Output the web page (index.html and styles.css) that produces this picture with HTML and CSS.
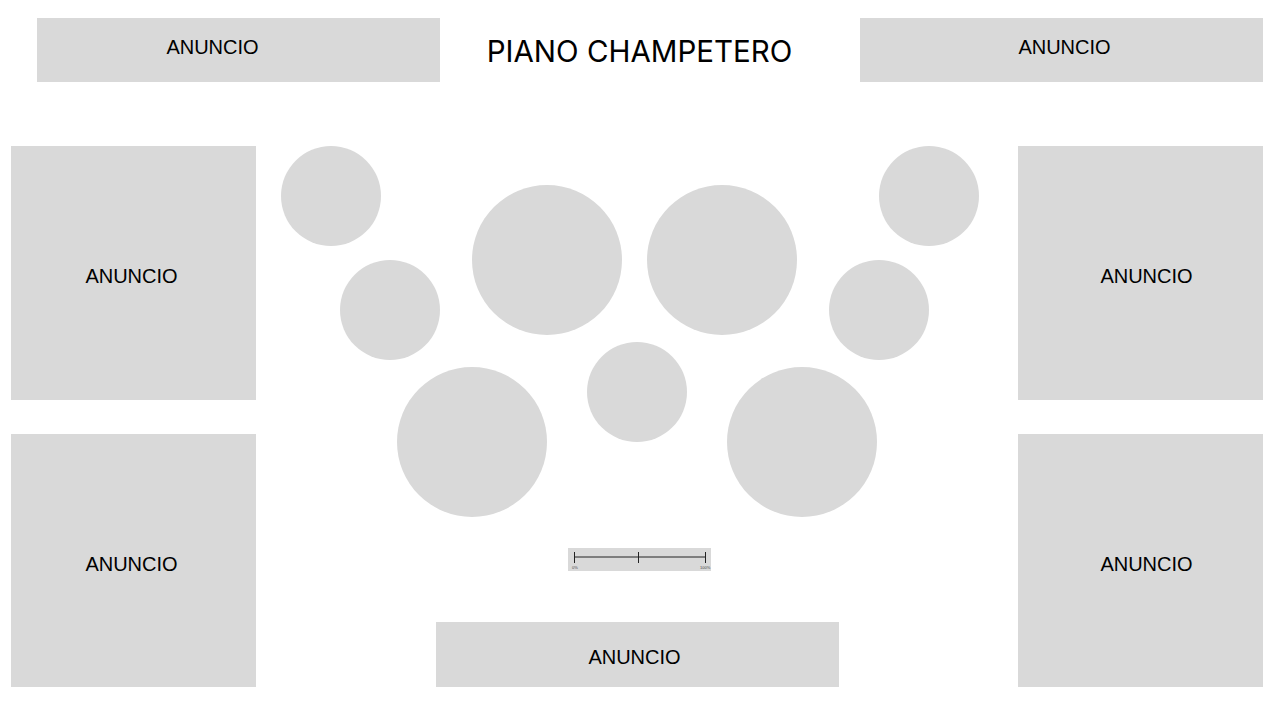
FILE: index.html
```html
<!DOCTYPE html>
<html lang="es">
<head>
    <meta charset="UTF-8">
    <meta name="viewport" content="width=device-width, initial-scale=1.0">
    <title>Piano Champetero</title>
    <link rel="stylesheet" href="styles.css">
</head>
<body>

<header class="top">
    <div class="ad ad-top-left">ANUNCIO</div>
    <h1 class="title">PIANO CHAMPETERO</h1>
    <div class="ad ad-top-right">ANUNCIO</div>
</header>

<main class="main">
    <div class="side side-left">
        <div class="ad">ANUNCIO</div>
        <div class="ad">ANUNCIO</div>
    </div>

    <div class="center">
        <div class="stage">
            <div class="pad small" style="left: 25px; top: 0;"></div>
            <div class="pad small" style="left: 84px; top: 114px;"></div>
            <div class="pad big" style="left: 216px; top: 39px;"></div>
            <div class="pad big" style="left: 391px; top: 39px;"></div>
            <div class="pad small" style="left: 623px; top: 0;"></div>
            <div class="pad small" style="left: 573px; top: 114px;"></div>
            <div class="pad small" style="left: 331px; top: 196px;"></div>
            <div class="pad big" style="left: 141px; top: 221px;"></div>
            <div class="pad big" style="left: 471px; top: 221px;"></div>
        </div>

        <div class="volume">
            <svg width="143" height="23" viewBox="0 0 143 23">
                <line x1="6" y1="9" x2="138" y2="9" stroke="#222" stroke-width="1"/>
                <line x1="6.5" y1="4" x2="6.5" y2="15" stroke="#222" stroke-width="1"/>
                <line x1="70.5" y1="4" x2="70.5" y2="15" stroke="#222" stroke-width="1"/>
                <line x1="137.5" y1="4" x2="137.5" y2="15" stroke="#222" stroke-width="1"/>
                <text x="4" y="21" font-size="4" fill="#444" font-family="Liberation Sans, sans-serif">0%</text>
                <text x="132" y="21" font-size="4" fill="#444" font-family="Liberation Sans, sans-serif">100%</text>
            </svg>
        </div>

        <div class="ad bottom-ad">ANUNCIO</div>
    </div>

    <div class="side side-right">
        <div class="ad">ANUNCIO</div>
        <div class="ad">ANUNCIO</div>
    </div>
</main>

</body>
</html>
```

FILE: styles.css
```css
body {
    margin: 0;
    background: #fff;
    font-family: "Liberation Sans", Arial, sans-serif;
    color: #000;
}
.ad {
    background: #d9d9d9;
    display: flex;
    align-items: center;
    justify-content: center;
    font-size: 20px;
    box-sizing: border-box;
}
.top {
    display: grid;
    grid-template-columns: 403px 1fr 403px;
    height: 64px;
    margin: 18px 17px 0 37px;
}
.ad-top-left {
    padding: 0 52px 6px 0;
}
.ad-top-right {
    padding: 0 0 6px 6px;
}
.title {
    margin: 0;
    font-family: Inter, "Noto Sans", sans-serif;
    font-weight: 400;
    font-size: 29.5px;
    display: flex;
    align-items: center;
    justify-content: center;
    padding: 2px 21px 0 0;
}
.main {
    display: grid;
    grid-template-columns: 245px 1fr 245px;
    height: 541px;
    margin: 64px 17px 0 11px;
}
.side {
    display: flex;
    flex-direction: column;
    gap: 34px;
}
.side .ad {
    flex: 1;
}
.side-left .ad {
    padding: 8px 4px 0 0;
}
.side-right .ad {
    padding: 8px 0 0 12px;
}
.center {
    display: flex;
    flex-direction: column;
    align-items: center;
}
.stage {
    position: relative;
    width: 100%;
    height: 371px;
}
.pad {
    position: absolute;
    border-radius: 50%;
    background: #d9d9d9;
}
.pad.small {
    width: 100px;
    height: 100px;
}
.pad.big {
    width: 150px;
    height: 150px;
}
.volume {
    margin-top: 31px;
    margin-left: 5px;
    width: 143px;
    height: 23px;
    background: #d9d9d9;
}
.volume svg {
    display: block;
}
.bottom-ad {
    margin-top: auto;
    width: 403px;
    height: 65px;
    padding: 5px 5px 0 0;
}
```
